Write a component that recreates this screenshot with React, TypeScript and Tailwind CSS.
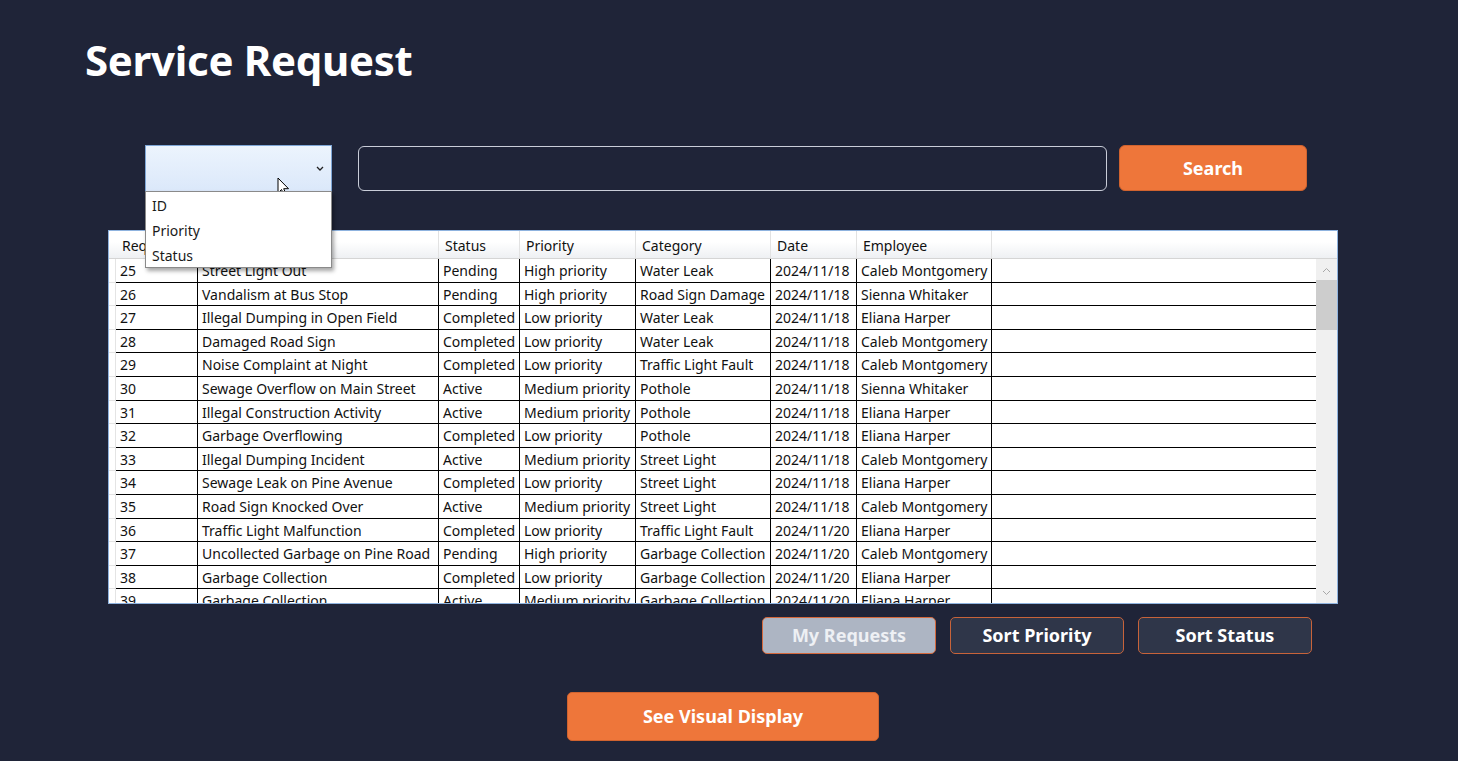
import React from "react";

type Row = {
  id: number;
  title: string;
  status: string;
  priority: string;
  category: string;
  date: string;
  employee: string;
};

const rows: Row[] = [
  { id: 25, title: "Street Light Out", status: "Pending", priority: "High priority", category: "Water Leak", date: "2024/11/18", employee: "Caleb Montgomery" },
  { id: 26, title: "Vandalism at Bus Stop", status: "Pending", priority: "High priority", category: "Road Sign Damage", date: "2024/11/18", employee: "Sienna Whitaker" },
  { id: 27, title: "Illegal Dumping in Open Field", status: "Completed", priority: "Low priority", category: "Water Leak", date: "2024/11/18", employee: "Eliana Harper" },
  { id: 28, title: "Damaged Road Sign", status: "Completed", priority: "Low priority", category: "Water Leak", date: "2024/11/18", employee: "Caleb Montgomery" },
  { id: 29, title: "Noise Complaint at Night", status: "Completed", priority: "Low priority", category: "Traffic Light Fault", date: "2024/11/18", employee: "Caleb Montgomery" },
  { id: 30, title: "Sewage Overflow on Main Street", status: "Active", priority: "Medium priority", category: "Pothole", date: "2024/11/18", employee: "Sienna Whitaker" },
  { id: 31, title: "Illegal Construction Activity", status: "Active", priority: "Medium priority", category: "Pothole", date: "2024/11/18", employee: "Eliana Harper" },
  { id: 32, title: "Garbage Overflowing", status: "Completed", priority: "Low priority", category: "Pothole", date: "2024/11/18", employee: "Eliana Harper" },
  { id: 33, title: "Illegal Dumping Incident", status: "Active", priority: "Medium priority", category: "Street Light", date: "2024/11/18", employee: "Caleb Montgomery" },
  { id: 34, title: "Sewage Leak on Pine Avenue", status: "Completed", priority: "Low priority", category: "Street Light", date: "2024/11/18", employee: "Eliana Harper" },
  { id: 35, title: "Road Sign Knocked Over", status: "Active", priority: "Medium priority", category: "Street Light", date: "2024/11/18", employee: "Caleb Montgomery" },
  { id: 36, title: "Traffic Light Malfunction", status: "Completed", priority: "Low priority", category: "Traffic Light Fault", date: "2024/11/20", employee: "Eliana Harper" },
  { id: 37, title: "Uncollected Garbage on Pine Road", status: "Pending", priority: "High priority", category: "Garbage Collection", date: "2024/11/20", employee: "Caleb Montgomery" },
  { id: 38, title: "Garbage Collection", status: "Completed", priority: "Low priority", category: "Garbage Collection", date: "2024/11/20", employee: "Eliana Harper" },
  { id: 39, title: "Garbage Collection", status: "Active", priority: "Medium priority", category: "Garbage Collection", date: "2024/11/20", employee: "Eliana Harper" },
];

const cols = [
  { label: "Request ID", w: "w-[82px]" },
  { label: "Title", w: "w-[241px]" },
  { label: "Status", w: "w-[81px]" },
  { label: "Priority", w: "w-[116px]" },
  { label: "Category", w: "w-[135px]" },
  { label: "Date", w: "w-[86px]" },
  { label: "Employee", w: "w-[135px]" },
];

function Cursor() {
  return (
    <svg className="absolute left-[132px] top-[32px]" width="14" height="20" viewBox="0 0 14 20">
      <path d="M1 1 L1 16 L4.5 12.5 L7.5 19 L9.5 18 L6.7 11.7 L11.5 11.7 Z" fill="#ffffff" stroke="#000000" strokeWidth="1" strokeLinejoin="round" />
    </svg>
  );
}

function Chevron({ up }: { up?: boolean }) {
  return (
    <svg width="9" height="6" viewBox="0 0 9 6">
      <path d={up ? "M1 5 L4.5 1.5 L8 5" : "M1 1 L4.5 4.5 L8 1"} fill="none" stroke="#a8a8a8" strokeWidth="1" />
    </svg>
  );
}

export default function App() {
  return (
    <div className="min-h-screen w-full bg-[#1f2438] font-['Noto_Sans',sans-serif] overflow-hidden">
      <h1 className="pl-[85px] pt-[34px] text-[42px] leading-[52px] font-bold text-white tracking-[-0.3px]">
        Service Request
      </h1>

      {/* search controls */}
      <div className="mt-[59px] flex items-start pl-[145px]">
        <div className="relative z-10">
          <div className="w-[187px] h-[47px] border border-[#7ea6d6] bg-gradient-to-b from-[#ecf4fd] to-[#dbe8fa] flex items-center justify-end pr-[7px]">
            <svg width="8" height="5" viewBox="0 0 8 5">
              <path d="M1 1 L4 4 L7 1" fill="none" stroke="#222" strokeWidth="1.3" />
            </svg>
          </div>
          <Cursor />
          <div className="absolute left-0 top-[46px] w-[187px] bg-white border border-[#8a8a8a] shadow-[2px_3px_4px_rgba(0,0,0,0.35)] pt-[1px] text-[14px] text-[#1a1a1a]">
            <div className="h-[25px] leading-[25px] pl-[6px]">ID</div>
            <div className="h-[25px] leading-[25px] pl-[6px]">Priority</div>
            <div className="h-[24px] leading-[25px] pl-[6px]">Status</div>
          </div>
        </div>
        <input
          className="ml-[26px] mt-[1px] w-[749px] h-[45px] rounded-[6px] border border-[#c9cdd8] bg-transparent outline-none px-3 text-white"
          aria-label="search"
        />
        <button className="ml-[12px] w-[188px] h-[46px] rounded-[6px] bg-[#ee763a] border border-[#d0632f] text-white text-[18px] font-bold">
          Search
        </button>
      </div>

      {/* data grid */}
      <div className="ml-[108px] mt-[38px] w-[1230px] h-[374px] border border-[#8fb3df] bg-white flex text-[14px] text-[#111]">
        <div className="flex-1 flex flex-col overflow-hidden">
          <div className="h-[28px] flex bg-gradient-to-b from-white from-40% to-[#eef0f3] border-b border-[#d5d5d5] shrink-0">
            <div className="w-[7px] shrink-0" />
            {cols.map((c) => (
              <div key={c.label} className={`${c.w} shrink-0 border-r border-[#e2e2e2] pl-[6px] leading-[29px] whitespace-nowrap overflow-hidden`}>
                {c.label}
              </div>
            ))}
            <div className="flex-1" />
          </div>
          <div className="flex-1 overflow-hidden">
            {rows.map((r) => (
              <div key={r.id} className="h-[23.6px] flex">
                <div className="w-[7px] shrink-0 border-b border-r border-[#e4e4e4]" />
                {[String(r.id), r.title, r.status, r.priority, r.category, r.date, r.employee].map((v, i) => (
                  <div
                    key={i}
                    className={`${cols[i].w} shrink-0 border-b border-r border-black pl-[4px] leading-[24px] whitespace-nowrap overflow-hidden`}
                  >
                    {v}
                  </div>
                ))}
                <div className="flex-1 border-b border-black" />
              </div>
            ))}
          </div>
        </div>
        <div className="w-[21px] shrink-0 flex flex-col">
          <div className="h-[28px] bg-gradient-to-b from-white from-40% to-[#eef0f3] border-b border-[#d5d5d5]" />
          <div className="flex-1 bg-[#f0f0f0] flex flex-col items-center">
            <div className="h-[21px] flex items-center justify-center">
              <Chevron up />
            </div>
            <div className="w-[21px] h-[50px] bg-[#cdcdcd]" />
            <div className="flex-1" />
            <div className="h-[21px] flex items-center justify-center">
              <Chevron />
            </div>
          </div>
        </div>
      </div>

      {/* sort buttons */}
      <div className="mt-[13px] flex justify-end gap-[14px] pr-[146px]">
        <button className="w-[174px] h-[37px] rounded-[5px] bg-[#adb5c3] border border-[#d4683c] text-[#eef0f4] text-[18px] font-bold">
          My Requests
        </button>
        <button className="w-[174px] h-[37px] rounded-[5px] bg-[#2f3649] border border-[#c7633a] text-white text-[18px] font-bold">
          Sort Priority
        </button>
        <button className="w-[174px] h-[37px] rounded-[5px] bg-[#2f3649] border border-[#c7633a] text-white text-[18px] font-bold">
          Sort Status
        </button>
      </div>

      <div className="mt-[38px] pl-[567px]">
        <button className="w-[312px] h-[49px] rounded-[5px] bg-[#ee763a] border border-[#d0632f] text-white text-[18px] font-bold">
          See Visual Display
        </button>
      </div>
    </div>
  );
}
